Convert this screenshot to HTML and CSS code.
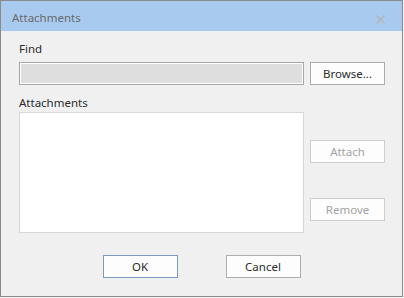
FILE: index.html
```html
<!DOCTYPE html>
<html lang="en">
<head>
    <meta charset="UTF-8">
    <title>Attachments</title>
    <link rel="stylesheet" href="styles.css">
</head>
<body>
    <div class="window">
        <!-- Barra de título -->
        <div class="titlebar">
            <span class="title">Attachments</span>
            <svg class="close" width="9" height="9" viewBox="0 0 9 9">
                <path d="M0.5 0.5 L8.5 8.5 M8.5 0.5 L0.5 8.5" stroke="#b3b3b3" stroke-width="1.3" fill="none"/>
            </svg>
        </div>

        <div class="content">
            <div class="label find-label">Find</div>
            <div class="row">
                <input class="find-box" type="text" disabled>
                <button class="btn">Browse...</button>
            </div>

            <div class="label list-label">Attachments</div>
            <div class="row">
                <div class="list-box"></div>
                <div class="side-buttons">
                    <button class="btn disabled attach-btn">Attach</button>
                    <button class="btn disabled remove-btn">Remove</button>
                </div>
            </div>

            <div class="footer">
                <button class="btn default">OK</button>
                <button class="btn">Cancel</button>
            </div>
        </div>
    </div>
</body>
</html>
```

FILE: styles.css
```css
body {
    margin: 0;
    background-color: #f6f6f6;
    font-family: 'Noto Sans', 'Open Sans', Arial, sans-serif;
    font-size: 11px;
}

.window {
    width: 403px;
    height: 297px;
    box-sizing: border-box;
    border: 1px solid #8a8a8a;
    background-color: #f0f0f0;
    display: flex;
    flex-direction: column;
}

.titlebar {
    height: 30px;
    background-color: #a9caef;
    display: flex;
    align-items: center;
    justify-content: space-between;
    padding: 2px 17px 0 11px;
    box-sizing: border-box;
}

.title {
    color: #6a6a6a;
    font-size: 11.5px;
}

.close {
    display: block;
    margin-top: 5px;
}

.content {
    padding: 0 0 0 18px;
    display: flex;
    flex-direction: column;
}

.label {
    color: #2b2b2b;
    font-size: 11.5px;
    line-height: 15px;
    height: 15px;
}

.find-label {
    margin-top: 10px;
    margin-bottom: 6px;
}

.list-label {
    margin-top: 10px;
    margin-bottom: 2px;
}

.row {
    display: flex;
    gap: 6px;
}

.find-box {
    width: 285px;
    height: 23px;
    box-sizing: border-box;
    margin: 0;
    border: 1px solid #a6a6a6;
    box-shadow: inset 0 0 0 1px #ffffff;
    background-color: #dedede;
    outline: none;
}

.btn {
    width: 75px;
    height: 23px;
    box-sizing: border-box;
    margin: 0;
    padding: 0;
    border: 1px solid #adadad;
    background-color: #fdfdfd;
    color: #2b2b2b;
    font-family: inherit;
    font-size: 11.5px;
    line-height: 20px;
}

.btn.disabled {
    border-color: #cdcdcd;
    color: #a3a3a3;
}

.btn.default {
    border-color: #7b9bc2;
}

.list-box {
    width: 285px;
    height: 121px;
    box-sizing: border-box;
    border: 1px solid #d7d7d7;
    background-color: #ffffff;
}

.side-buttons {
    display: flex;
    flex-direction: column;
    padding-top: 28px;
    gap: 35px;
}

.footer {
    display: flex;
    justify-content: center;
    gap: 48px;
    margin-top: 22px;
    margin-left: -18px;
}
```
